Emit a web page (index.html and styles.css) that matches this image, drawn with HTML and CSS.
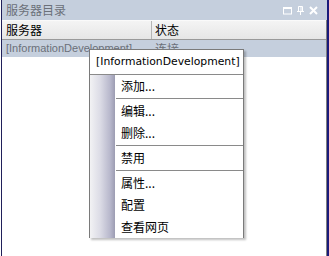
FILE: index.html
```html
<!DOCTYPE html>
<html>
<head>
<meta charset="utf-8">
<link rel="stylesheet" href="styles.css">
</head>
<body>
<div class="window">
  <div class="titlebar">
    <span class="title">服务器目录</span>
    <div class="tools">
      <svg width="9" height="9" viewBox="0 0 9 9"><rect x="0.5" y="1.5" width="8" height="6.5" fill="none" stroke="#fff" stroke-width="1"/><rect x="0" y="1" width="9" height="2" fill="#fff"/></svg>
      <svg width="9" height="9" viewBox="0 0 9 9"><path d="M2.5 0.5h4v5h-4z M1 5.5h7 M4.5 5.5v3.5" fill="none" stroke="#fff" stroke-width="1"/><path d="M5 1v4" stroke="#fff" stroke-width="1"/></svg>
      <svg width="9" height="9" viewBox="0 0 9 9"><path d="M1 1l7 7M8 1l-7 7" stroke="#fff" stroke-width="2"/></svg>
    </div>
  </div>
  <div class="list">
    <div class="head">
      <div class="col c1">服务器</div>
      <div class="col c2">状态</div>
    </div>
    <div class="row sel">
      <div class="col c1">[InformationDevelopment]</div>
      <div class="col c2">连接</div>
    </div>
  </div>
</div>
<div class="menu">
  <div class="mhead">[InformationDevelopment]</div>
  <div class="mbody">
    <div class="item">添加...</div>
    <div class="sep"></div>
    <div class="item">编辑...</div>
    <div class="item">删除...</div>
    <div class="sep"></div>
    <div class="item">禁用</div>
    <div class="sep"></div>
    <div class="item">属性...</div>
    <div class="item">配置</div>
    <div class="item">查看网页</div>
  </div>
</div>
</body>
</html>
```
FILE: styles.css
```css
html, body {
  margin: 0;
  padding: 0;
  width: 329px;
  height: 256px;
  overflow: hidden;
  background: #fff;
}
body {
  font-family: "Noto Sans CJK SC", "DejaVu Sans", sans-serif;
  font-size: 12px;
}
.window {
  box-sizing: border-box;
  height: 256px;
  margin-left: 1px;
  width: 328px;
  border-left: 1px solid #20205a;
  border-right: 2px solid #1a1a7a;
  display: flex;
  flex-direction: column;
  background: #fff;
}
.titlebar {
  height: 20px;
  background: #c5cfdd;
  display: flex;
  align-items: center;
  justify-content: space-between;
  padding: 0 9px 0 4px;
}
.title {
  color: #6b7079;
  font-size: 12px;
  line-height: 20px;
}
.tools {
  display: flex;
  gap: 4px;
  align-items: center;
}
.list {
  flex: 1;
  display: flex;
  flex-direction: column;
  border-right: 1px solid #808080;
}
.head {
  display: flex;
  height: 18px;
  background: linear-gradient(#f4f4f4, #e6e6e6);
  border-bottom: 1px solid #9a9a9a;
  border-top: 1px solid #fafafa;
}
.head .col {
  color: #000;
  line-height: 18px;
}
.col.c1 {
  width: 145px;
  padding-left: 4px;
  border-right: 1px solid #b5b5b5;
}
.col.c2 {
  padding-left: 3px;
}
.row {
  display: flex;
  height: 17px;
  line-height: 17px;
}
.row.sel {
  background: #c5cfdd;
  color: #6b7079;
}
.row .col.c1 {
  border-right: none;
  padding-right: 1px;
  white-space: nowrap;
}
.row .col {
  font-family: "Liberation Sans", "Noto Sans CJK SC", sans-serif;
  font-size: 11px;
}
.row .col.c2 {
  font-family: "Noto Sans CJK SC", sans-serif;
  font-size: 12px;
}
.menu {
  position: absolute;
  left: 89px;
  top: 49px;
  width: 153px;
  height: 187px;
  background: #fff;
  border: 1px solid #7a7a7a;
  box-shadow: 2px 2px 2px rgba(0,0,0,0.25);
  display: flex;
  flex-direction: column;
}
.mhead {
  height: 24px;
  line-height: 24px;
  padding-left: 6px;
  font-family: "DejaVu Sans", sans-serif;
  font-size: 10.8px;
  border-bottom: 1px solid #8a8a8a;
}
.mbody {
  flex: 1;
  background: linear-gradient(90deg, #f2f2f4 0, #dcdce6 10px, #b8b8cc 20px, #9c9cb2 25px, #fff 25px);
  display: flex;
  flex-direction: column;
}
.item {
  height: 22px;
  line-height: 22px;
  padding-left: 31px;
}
.sep {
  margin-left: 26px;
  height: 1px;
  background: #8a8a8a;
  margin-top: 1px;
  margin-bottom: 1px;
}
```
